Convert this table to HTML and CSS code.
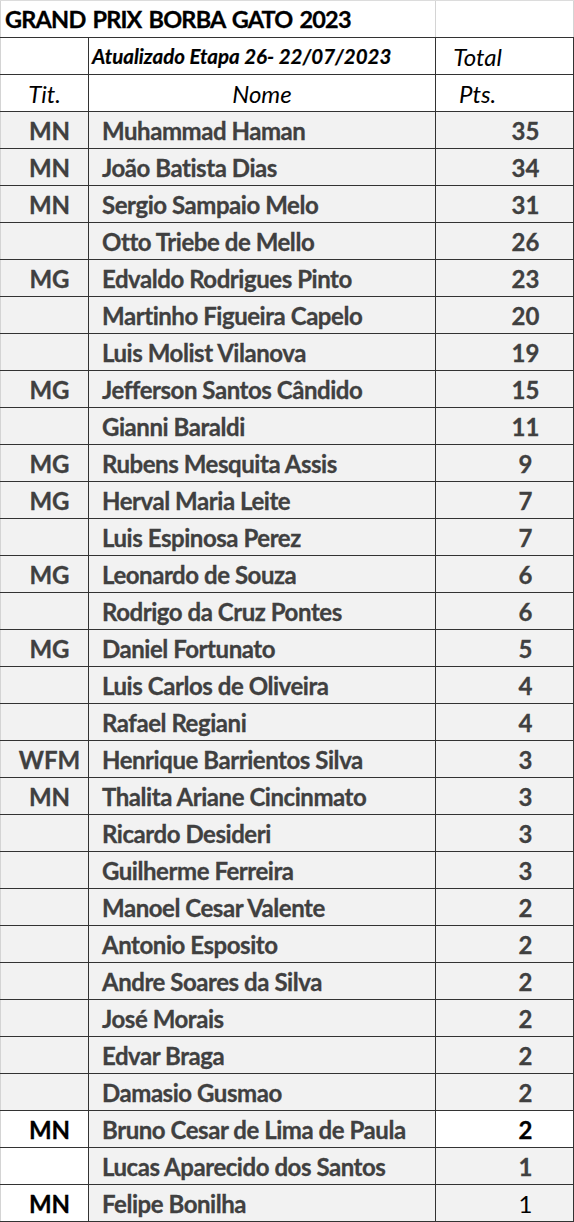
FILE: index.html
```html
<!DOCTYPE html>
<html lang="pt">
<head>
<meta charset="utf-8">
<title>Grand Prix Borba Gato 2023</title>
<link rel="stylesheet" href="styles.css">
</head>
<body>
<div class="sheet">
  <div class="row title-row">
    <div class="cell c1 title-cell">GRAND PRIX BORBA GATO 2023</div>
    <div class="cell c3 blank"></div>
  </div>
  <div class="row head">
    <div class="cell c1"></div>
    <div class="cell c2 update">Atualizado Etapa 26- 22/07/2023</div>
    <div class="cell c3 head-pts">Total</div>
  </div>
  <div class="row head">
    <div class="cell c1 head-tit">Tit.</div>
    <div class="cell c2 head-name">Nome</div>
    <div class="cell c3 head-pts">Pts.</div>
  </div>
  <div class="row"><div class="cell c1 tit">MN</div><div class="cell c2 name">Muhammad Haman</div><div class="cell c3 pts">35</div></div>
  <div class="row"><div class="cell c1 tit">MN</div><div class="cell c2 name">João Batista Dias</div><div class="cell c3 pts">34</div></div>
  <div class="row"><div class="cell c1 tit">MN</div><div class="cell c2 name">Sergio Sampaio Melo</div><div class="cell c3 pts">31</div></div>
  <div class="row"><div class="cell c1 tit"></div><div class="cell c2 name">Otto Triebe de Mello</div><div class="cell c3 pts">26</div></div>
  <div class="row"><div class="cell c1 tit">MG</div><div class="cell c2 name">Edvaldo Rodrigues Pinto</div><div class="cell c3 pts">23</div></div>
  <div class="row"><div class="cell c1 tit"></div><div class="cell c2 name">Martinho Figueira Capelo</div><div class="cell c3 pts">20</div></div>
  <div class="row"><div class="cell c1 tit"></div><div class="cell c2 name">Luis Molist Vilanova</div><div class="cell c3 pts">19</div></div>
  <div class="row"><div class="cell c1 tit">MG</div><div class="cell c2 name">Jefferson Santos Cândido</div><div class="cell c3 pts">15</div></div>
  <div class="row"><div class="cell c1 tit"></div><div class="cell c2 name">Gianni Baraldi</div><div class="cell c3 pts">11</div></div>
  <div class="row"><div class="cell c1 tit">MG</div><div class="cell c2 name">Rubens Mesquita Assis</div><div class="cell c3 pts">9</div></div>
  <div class="row"><div class="cell c1 tit">MG</div><div class="cell c2 name">Herval Maria Leite</div><div class="cell c3 pts">7</div></div>
  <div class="row"><div class="cell c1 tit"></div><div class="cell c2 name">Luis Espinosa Perez</div><div class="cell c3 pts">7</div></div>
  <div class="row"><div class="cell c1 tit">MG</div><div class="cell c2 name">Leonardo de Souza</div><div class="cell c3 pts">6</div></div>
  <div class="row"><div class="cell c1 tit"></div><div class="cell c2 name">Rodrigo da Cruz Pontes</div><div class="cell c3 pts">6</div></div>
  <div class="row"><div class="cell c1 tit">MG</div><div class="cell c2 name">Daniel Fortunato</div><div class="cell c3 pts">5</div></div>
  <div class="row"><div class="cell c1 tit"></div><div class="cell c2 name">Luis Carlos de Oliveira</div><div class="cell c3 pts">4</div></div>
  <div class="row"><div class="cell c1 tit"></div><div class="cell c2 name">Rafael Regiani</div><div class="cell c3 pts">4</div></div>
  <div class="row"><div class="cell c1 tit">WFM</div><div class="cell c2 name">Henrique Barrientos Silva</div><div class="cell c3 pts">3</div></div>
  <div class="row"><div class="cell c1 tit">MN</div><div class="cell c2 name">Thalita Ariane Cincinmato</div><div class="cell c3 pts">3</div></div>
  <div class="row"><div class="cell c1 tit"></div><div class="cell c2 name">Ricardo Desideri</div><div class="cell c3 pts">3</div></div>
  <div class="row"><div class="cell c1 tit"></div><div class="cell c2 name">Guilherme Ferreira</div><div class="cell c3 pts">3</div></div>
  <div class="row"><div class="cell c1 tit"></div><div class="cell c2 name">Manoel Cesar Valente</div><div class="cell c3 pts">2</div></div>
  <div class="row"><div class="cell c1 tit"></div><div class="cell c2 name">Antonio Esposito</div><div class="cell c3 pts">2</div></div>
  <div class="row"><div class="cell c1 tit"></div><div class="cell c2 name">Andre Soares da Silva</div><div class="cell c3 pts">2</div></div>
  <div class="row"><div class="cell c1 tit"></div><div class="cell c2 name">José Morais</div><div class="cell c3 pts">2</div></div>
  <div class="row"><div class="cell c1 tit"></div><div class="cell c2 name">Edvar Braga</div><div class="cell c3 pts">2</div></div>
  <div class="row"><div class="cell c1 tit"></div><div class="cell c2 name">Damasio Gusmao</div><div class="cell c3 pts">2</div></div>
  <div class="row"><div class="cell c1 tit white black">MN</div><div class="cell c2 name">Bruno Cesar de Lima de Paula</div><div class="cell c3 pts white black">2</div></div>
  <div class="row"><div class="cell c1 tit white"></div><div class="cell c2 name">Lucas Aparecido dos Santos</div><div class="cell c3 pts">1</div></div>
  <div class="row"><div class="cell c1 tit white black">MN</div><div class="cell c2 name">Felipe Bonilha</div><div class="cell c3 pts black regular">1</div></div>
</div>
</body>
</html>
```

FILE: styles.css
```css
* { box-sizing: border-box; }
html, body { margin: 0; padding: 0; background: #ffffff; }
body {
  font-family: Lato, "Open Sans", "Liberation Sans", sans-serif;
}
.sheet {
  width: 574px;
}
.row {
  display: grid;
  grid-template-columns: 88px 347px 139px;
  height: 37px;
  border-bottom: 1px solid #333333;
}
.title-row {
  height: 38px;
  border-top: 1px solid #dcdcdc;
  grid-template-columns: 435px 139px;
}
.cell {
  display: flex;
  align-items: center;
  min-width: 0;
  white-space: nowrap;
  overflow: hidden;
}
.c1 {
  border-left: 1px solid #d4d4d4;
  justify-content: center;
}
.c2 {
  border-left: 1px solid #333333;
}
.c3 {
  border-left: 1px solid #333333;
  border-right: 1px solid #333333;
  justify-content: center;
}
.title-cell {
  justify-content: flex-start;
  padding-left: 4px;
  font-weight: 700;
  font-size: 23.5px;
  letter-spacing: -0.8px;
  word-spacing: 2px;
  color: #000;
  -webkit-text-stroke: 0.3px #000;
}
.title-row .blank {
  border-left-color: #d4d4d4;
  border-right-color: #d4d4d4;
}
.head .cell { color: #000; }
.update {
  padding-left: 3px;
  font-weight: 700;
  font-style: italic;
  font-size: 20.5px;
  -webkit-text-stroke: 0.2px #000;
}
.head-tit, .head-name, .head-pts {
  font-style: italic;
  font-size: 24px;
}
.head-name { justify-content: center; }
.head-pts { padding-right: 54px; }

.tit, .name, .pts {
  background: #f2f2f2;
  color: #404040;
  font-weight: 700;
  font-size: 24px;
  -webkit-text-stroke: 0.3px currentColor;
}
.name { letter-spacing: -0.45px; }
.tit { padding-left: 10px; }
.name { padding-left: 13px; }
.pts { padding-left: 42px; }
.white { background: #ffffff; }
.black { color: #000000; }
.regular { font-weight: 400; -webkit-text-stroke: 0; }
```
